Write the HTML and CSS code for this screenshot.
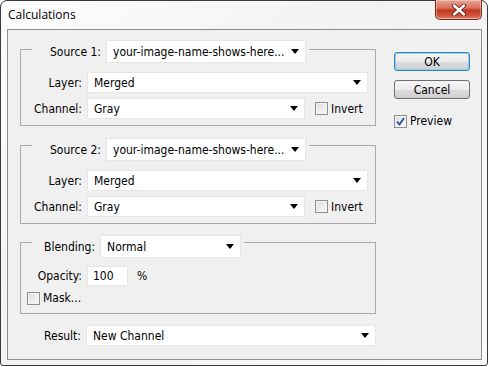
FILE: index.html
```html
<!DOCTYPE html>
<html lang="en">
<head>
    <meta charset="UTF-8">
    <title>Calculations</title>
    <link rel="stylesheet" href="styles.css">
</head>
<body>
    <div class="window">
        <div class="titlebar">
            <span class="title">Calculations</span>
            <div class="close">
                <svg width="16" height="12" viewBox="0 0 16 12"><path d="M3 1.5 L13 10.5 M13 1.5 L3 10.5" stroke="#5a1f17" stroke-width="4.2" stroke-linecap="round"/><path d="M3 1.5 L13 10.5 M13 1.5 L3 10.5" stroke="#fff" stroke-width="2.4" stroke-linecap="round"/></svg>
            </div>
        </div>
        <div class="client">
            <div class="left">
                <!--Source 1-->
                <div class="group">
                    <div class="head">
                        <span class="head-label">Source 1:</span>
                        <div class="select head-select"><span>your-image-name-shows-here...</span><i class="arrow"></i></div>
                    </div>
                    <div class="row row-first">
                        <span class="label">Layer:</span>
                        <div class="select sel-layer"><span>Merged</span><i class="arrow"></i></div>
                    </div>
                    <div class="row row-next">
                        <span class="label">Channel:</span>
                        <div class="select sel-channel"><span>Gray</span><i class="arrow"></i></div>
                        <span class="check check-invert"></span><span class="check-text">Invert</span>
                    </div>
                </div>
                <!--Source 2-->
                <div class="group group-two">
                    <div class="head head-low">
                        <span class="head-label">Source 2:</span>
                        <div class="select head-select"><span>your-image-name-shows-here...</span><i class="arrow"></i></div>
                    </div>
                    <div class="row row-first">
                        <span class="label">Layer:</span>
                        <div class="select sel-layer"><span>Merged</span><i class="arrow"></i></div>
                    </div>
                    <div class="row row-next">
                        <span class="label">Channel:</span>
                        <div class="select sel-channel"><span>Gray</span><i class="arrow"></i></div>
                        <span class="check check-invert"></span><span class="check-text">Invert</span>
                    </div>
                </div>
                <!--Blending-->
                <div class="group group-blend">
                    <div class="head head-low head-blend">
                        <span class="head-label">Blending:</span>
                        <div class="select sel-blend"><span>Normal</span><i class="arrow"></i></div>
                    </div>
                    <div class="row row-opacity">
                        <span class="label">Opacity:</span>
                        <div class="input">100</div>
                        <span class="percent">%</span>
                    </div>
                    <div class="row row-mask">
                        <span class="check"></span><span class="check-text">Mask...</span>
                    </div>
                </div>
                <div class="row row-result">
                    <span class="label">Result:</span>
                    <div class="select sel-result"><span>New Channel</span><i class="arrow"></i></div>
                </div>
            </div>
            <div class="side">
                <div class="button button-default">OK</div>
                <div class="button button-cancel">Cancel</div>
                <div class="preview">
                    <span class="check checked">
                        <svg width="9" height="9" viewBox="0 0 9 9"><path d="M1 4.5 L3.5 7.5 L8 1" fill="none" stroke="#2a4fa0" stroke-width="1.8"/></svg>
                    </span><span class="check-text">Preview</span>
                </div>
            </div>
        </div>
    </div>
</body>
</html>
```

FILE: styles.css
```css
*{
    margin: 0;
    padding: 0;
    box-sizing: border-box;
}
body{
    background: #fff;
    font-family: "DejaVu Sans Condensed", "DejaVu Sans", sans-serif;
    font-size: 12px;
    color: #000;
}
.window{
    position: relative;
    width: 488px;
    height: 366px;
    border: 1px solid #3a3a3a;
    border-radius: 7px 7px 3px 3px;
    background: linear-gradient(135deg, #fdfdfd 0%, #f2f2f2 45%, #fbfbfb 100%);
    padding: 0 5px 5px 6px;
    display: flex;
    flex-direction: column;
}
.titlebar{
    height: 28px;
    padding: 6px 0 0 1px;
}
.title{
    font-family: "Open Sans", sans-serif;
    font-size: 12px;
    line-height: 16px;
}
.close{
    position: absolute;
    top: -1px;
    right: 5px;
    width: 47px;
    height: 20px;
    border: 1px solid #7b2b20;
    border-top: none;
    border-radius: 0 0 5px 5px;
    background: linear-gradient(#e9a594 0%, #d9735e 40%, #c2381f 55%, #cf5a40 85%, #e58b74 100%);
    box-shadow: inset 0 0 0 1px rgba(255,255,255,0.35);
    display: flex;
    align-items: center;
    justify-content: center;
}
.client{
    flex: 1;
    border: 1px solid #8e8e8e;
    background: #f0f0f0;
    display: flex;
    padding-left: 12px;
}
.left{
    width: 358px;
    padding-top: 19px;
}
.group{
    width: 356px;
    border: 1px solid #a9a9a9;
    padding-bottom: 6px;
}
.group-two{
    margin-top: 19px;
}
.group-blend{
    margin-top: 18px;
    padding-bottom: 8px;
}
.head{
    display: flex;
    width: fit-content;
    align-items: center;
    margin: -10px 0 0 11px;
    padding: 0 3px 0 18px;
    background: #f0f0f0;
}
.head-low{
    margin-top: -8px;
}
.head-blend{
    padding-left: 12px;
}
.head-label{
    margin-right: 5px;
}
.select{
    height: 21px;
    background: #fff;
    border: 1px solid #e6e6e6;
    display: flex;
    align-items: center;
    justify-content: space-between;
    padding: 0 6px 0 6px;
}
.head-select{
    width: 200px;
    height: 23px;
}
.sel-blend{
    width: 141px;
    height: 23px;
}
.sel-layer{
    width: 281px;
}
.sel-channel{
    width: 218px;
}
.sel-result{
    width: 290px;
}
.arrow{
    width: 0;
    height: 0;
    border-left: 4px solid transparent;
    border-right: 4px solid transparent;
    border-top: 5px solid #000;
}
.row{
    display: flex;
    align-items: center;
}
.row-first{
    margin-top: 9px;
}
.row-next{
    margin-top: 5px;
}
.row-opacity{
    margin-top: 8px;
}
.label{
    width: 61px;
    text-align: right;
    margin-right: 5px;
}
.check{
    display: inline-flex;
    align-items: center;
    justify-content: center;
    width: 13px;
    height: 13px;
    border: 1px solid #8f8f8f;
    background: linear-gradient(135deg, #dcdcdc, #fafafa);
    box-shadow: inset 0 0 0 1px #f4f4f4;
    margin-right: 3px;
}
.check-invert{
    margin-left: 10px;
}
.input{
    width: 41px;
    height: 20px;
    background: #fff;
    border: 1px solid #e6e6e6;
    padding: 2px 0 0 5px;
}
.percent{
    margin-left: 9px;
}
.row-mask{
    margin-top: 5px;
    padding-left: 6px;
}
.row-result{
    margin-top: 11px;
}
.side{
    margin-left: 16px;
    padding-top: 22px;
}
.button{
    width: 76px;
    height: 19px;
    border: 1px solid #707070;
    border-radius: 3px;
    background: linear-gradient(#f6f6f6 0%, #ebebeb 50%, #dddddd 51%, #cfcfcf 100%);
    display: flex;
    align-items: center;
    justify-content: center;
}
.button-default{
    border-color: #3c7fb1;
    box-shadow: inset 0 0 0 1px #8ad4f3;
}
.button-cancel{
    margin-top: 9px;
}
.preview{
    display: flex;
    align-items: center;
    margin-top: 15px;
}
.checked svg{
    display: block;
}
```
